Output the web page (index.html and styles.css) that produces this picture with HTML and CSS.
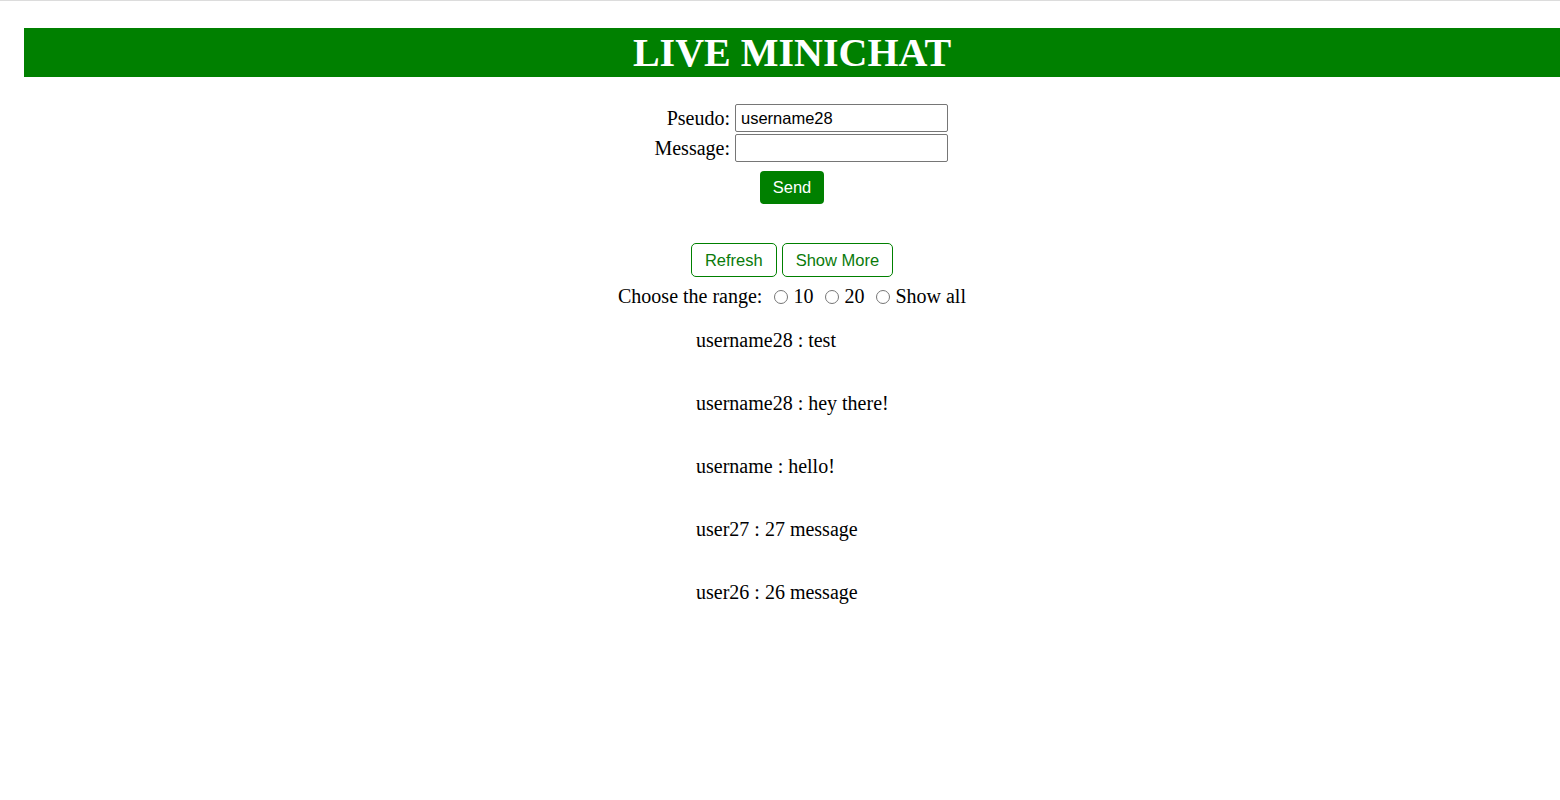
FILE: index.html
```html
<!DOCTYPE html>
<html>
<head>
<meta charset="utf-8">
<title>Live Minichat</title>
<link rel="stylesheet" href="styles.css">
</head>
<body>
<div class="page">
  <header class="banner"><h1 class="title">LIVE MINICHAT</h1></header>
  <form class="chat-form">
    <label class="lbl" for="pseudo">Pseudo:</label>
    <input class="field" id="pseudo" type="text" value="username28">
    <label class="lbl" for="message">Message:</label>
    <input class="field" id="message" type="text">
  </form>
  <div class="send-row"><button class="btn-send" type="button">Send</button></div>
  <div class="actions">
    <button class="btn-outline" type="button">Refresh</button>
    <button class="btn-outline" type="button">Show More</button>
  </div>
  <div class="range">Choose the range: <label><input type="radio" name="r"> 10</label> <label><input type="radio" name="r"> 20</label> <label><input type="radio" name="r"> Show all</label></div>
  <div class="messages">
    <p class="msg">username28 : test</p>
    <p class="msg">username28 : hey there!</p>
    <p class="msg">username : hello!</p>
    <p class="msg">user27 : 27 message</p>
    <p class="msg">user26 : 26 message</p>
  </div>
</div>
</body>
</html>
```
FILE: styles.css
```css
html, body {
  margin: 0;
  padding: 0;
  background: #fff;
}
body {
  border-top: 1px solid #dcdcdc;
  font-family: "Liberation Serif", "Times New Roman", serif;
  font-size: 20px;
  color: #000;
}
.page {
  margin-left: 24px;
  padding-top: 27px;
}
.banner {
  background: #008000;
  height: 49px;
  display: flex;
  align-items: center;
  justify-content: center;
}
.title {
  margin: 0;
  color: #fff;
  font-size: 40px;
  font-weight: bold;
  line-height: 48px;
}
.chat-form {
  margin-top: 27px;
  display: grid;
  grid-template-columns: 706px 213px;
  column-gap: 5px;
  row-gap: 2px;
  align-items: center;
}
.lbl {
  text-align: right;
  line-height: 23px;
}
.field {
  box-sizing: border-box;
  width: 213px;
  height: 28px;
  margin: 0;
  padding: 1px 5px;
  border: 1px solid #767676;
  border-radius: 2px;
  font-family: "Liberation Sans", Arial, sans-serif;
  font-size: 16.5px;
  color: #000;
}
.send-row {
  margin-top: 9px;
  display: flex;
  justify-content: center;
}
.btn-send {
  box-sizing: border-box;
  height: 33px;
  width: 64px;
  padding: 0;
  background: #008000;
  color: #fff;
  border: none;
  border-radius: 4px;
  font-family: "Liberation Sans", Arial, sans-serif;
  font-size: 16.5px;
}
.actions {
  margin-top: 39px;
  display: flex;
  justify-content: center;
  gap: 5px;
}
.btn-outline {
  box-sizing: border-box;
  height: 34px;
  padding: 0 13px;
  background: #fff;
  color: #0a7a0a;
  border: 1px solid #008000;
  border-radius: 5px;
  font-family: "Liberation Sans", Arial, sans-serif;
  font-size: 16.5px;
}
.range {
  margin-top: 8px;
  text-align: center;
  line-height: 23px;
}
.range input {
  margin: 0 0 0 7px;
  width: 14px;
  height: 14px;
  vertical-align: -1px;
}
.messages {
  width: 192px;
  margin: 21px auto 0;
  white-space: nowrap;
}
.msg {
  margin: 0 0 40px;
  line-height: 23px;
}
```
